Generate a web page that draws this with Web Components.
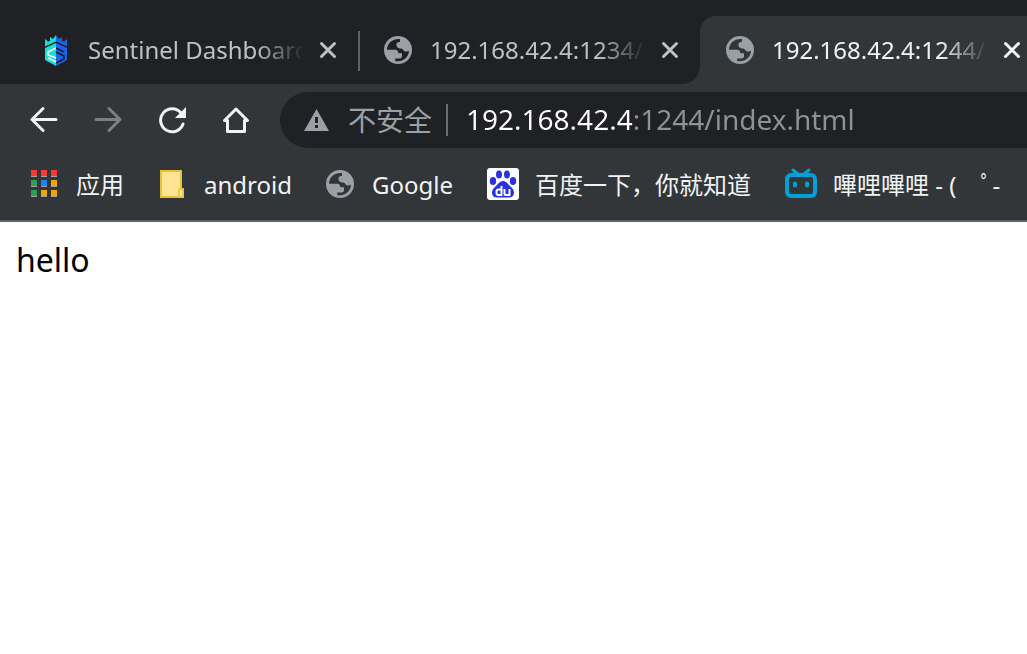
<!DOCTYPE html>
<html lang="zh">
<head>
<meta charset="utf-8">
<title>192.168.42.4:1244/index.html</title>
<style>
html, body { margin: 0; }
body { background: #fff; font-family: "Noto Sans", "Noto Sans CJK SC", sans-serif; overflow-x: hidden; }
</style>
</head>
<body>
<browser-window></browser-window>
<script>
const define = (name, html, setup) => {
  const template = document.createElement('template');
  template.innerHTML = html;
  customElements.define(name, class extends HTMLElement {
    constructor() {
      super();
      this.attachShadow({ mode: 'open' }).append(template.content.cloneNode(true));
    }
    connectedCallback() { if (setup) setup(this, this.shadowRoot); }
  });
};

const ICONS = {
  globe: ['0 0 28 28', '<path fill="#9aa0a6" fill-rule="evenodd" d="M14 0a14 14 0 1 0 0 28a14 14 0 1 0 0-28z M16 3.2c-7-.8-13 4-13 10.600h8.200c2.200.2 3 1.200 3.200 3.400h3.600v3.400c0 1-1 1.800-2.400 1.800h-4.400v2.600c7.400 1.400 13.400-3 13.800-10.200c-1.800 1-4.500 1.200-5.700-.8c-.8-1.200-1.900-1.600-3.600-1.600c-2-.2-3.100-1.500-3.300-3.400c-.1-1.600.8-2.500 2.200-3h1.400z"/>'],
  sentinel: ['0 0 24 32', '<path fill="#1be0cf" d="M1 5l3 2.500 2-.5V3l3 2 3-4v6.500L1 12.500zM1 14l11-5v23L1 26z"/><path fill="#1d63e8" d="M23 5l-3 2.500-2-.5V3l-3 2-3-4v6.500l11 5zM23 14L12 9v23l11-6z"/><path fill="none" stroke="#fff" stroke-width="1.500" d="M12 14l-8 4v3l8 3M4 24l8 4"/><path fill="none" stroke="#101d35" stroke-width="1.500" d="M12 14l8 4M12 18l8 4v3l-8 4"/>'],
  folder: ['0 0 28 28', '<path d="M3 1h20v18h2v8H3z" fill="#ffe591" stroke="#e8c13c" stroke-width="2"/><path d="M21 26v-7h4v8h-4z" fill="#ffe591" stroke="#e8c13c" stroke-width="1.500"/>'],
  apps: ['0 0 28 28', '<path fill="#fa3730" d="M1 0h6v6H1zm10 0h6v6h-6zm10 0h6v6h-6z"/><path fill="#2f9e55" d="M1 10h6v6H1zm0 10h6v6H1z"/><path fill="#1a86f5" d="M11 10h6v6h-6z"/><path fill="#f2a600" d="M21 10h6v6h-6zM11 20h6v6h-6zm10 0h6v6h-6z"/><path fill="#9b9d9e" d="M1 6h6v1H1zm10 0h6v1h-6zm10 0h6v1h-6zM1 16h6v1H1zm10 0h6v1h-6zm10 0h6v1h-6zM1 26h6v1H1zm10 0h6v1h-6zm10 0h6v1h-6z"/>'],
  baidu: ['0 0 32 32', '<rect width="32" height="32" rx="3" fill="#fff"/><g fill="#2932e1"><ellipse cx="6" cy="13" rx="3.200" ry="4"/><ellipse cx="12" cy="6.500" rx="3" ry="4"/><ellipse cx="20" cy="6.500" rx="3" ry="4"/><ellipse cx="26" cy="13" rx="3.200" ry="4"/><path d="M16 13c3 0 4.500 2.500 6.500 4.500c2.500 2.500 4.500 4 4.500 7c0 4-3 5.200-6 5H11c-3 .2-6-1-6-5c0-3 2-4.500 4.500-7c2-2 3.500-4.500 6.500-4.500z"/></g><path fill="none" stroke="#fff" stroke-width="2" d="M14.500 18v9h-3a2 2 0 0 1-2-2v-1.500a2 2 0 0 1 2-2h3M17.500 21v4.500a1.500 1.500 0 0 0 1.500 1.500h3.500v-6"/>'],
  bilibili: ['0 0 32 32', '<g fill="none" stroke="#00a1d6" stroke-linecap="round"><rect x="2" y="7" width="28" height="21" rx="4" stroke-width="4"/><path stroke-width="3" d="M8 2l5 4M24 2l-5 4"/><path stroke-width="4" d="M10 15.500v2M22 15.500v2"/></g>'],
  close: ['0 0 18 18', '<path fill="none" stroke="currentColor" stroke-width="3" stroke-linecap="round" d="M2.500 2.500l13 13m0-13l-13 13"/>'],
  back: ['0 0 28 28', '<path fill="none" stroke="currentColor" stroke-width="3" stroke-linecap="round" stroke-linejoin="round" d="M13 2.500L2 13.500l11 11M2 13.500h24"/>'],
  forward: ['0 0 28 28', '<path fill="none" stroke="currentColor" stroke-width="3" stroke-linecap="round" stroke-linejoin="round" d="M15 2.500l11 11-11 11M26 13.500H2"/>'],
  reload: ['0 0 28 28', '<path fill="none" stroke="currentColor" stroke-width="3" stroke-linecap="round" d="M23 7a11.500 11.500 0 1 0 2 11"/><path fill="currentColor" d="M28 1v11H17z"/>'],
  home: ['0 0 28 28', '<path fill="none" stroke="currentColor" stroke-width="3" stroke-linecap="round" stroke-linejoin="round" d="M2.500 14.500L14 3l11.500 11.500h-3V25.500h-17v-11z"/>'],
  warning: ['0 0 26 24', '<path fill="#9aa0a6" d="M12.500 1L25 23H0z"/><path fill="#202124" d="M11 9h3v6h-3zM11 17h3v3h-3z"/>']
};
define('ui-icon', `<style>
:host { display: block; flex: none; }
svg { display: block; width: 100%; height: 100%; }
</style>`, (host, root) => {
  const [box, art] = ICONS[host.getAttribute('name')];
  root.innerHTML += `<svg viewBox="${box}" aria-hidden="true">${art}</svg>`;
});

define('browser-tab', `<style>
:host { display: flex; align-items: center; flex: 0 0 342px; height: 68px; box-sizing: border-box; padding-left: 26px; color: #bdc1c6; position: relative; }
:host([separated])::after { content: ""; position: absolute; right: -2px; top: 15px; width: 2px; height: 40px; background: #5f6165; }
:host([active]) { background: #323639; color: #f1f3f4; border-radius: 16px 16px 0 0; }
:host([active])::before { content: ""; position: absolute; left: -16px; bottom: 0; width: 16px; height: 16px; background: radial-gradient(circle at 0 0, #202124 15px, #323639 16px); }
::slotted(ui-icon) { width: 28px; height: 32px; }
.title { width: 216px; margin-left: 18px; font-size: 24px; line-height: 32px; white-space: nowrap; overflow: hidden; mask-image: linear-gradient(90deg, #000 168px, transparent 216px); }
button { display: grid; place-items: center; width: 32px; height: 32px; margin: 0 0 0 8px; padding: 0; border: 0; background: none; color: inherit; }
button ui-icon { width: 18px; height: 18px; }
</style>
<slot name="icon"></slot><div class="title"><slot></slot></div>
<button aria-label="关闭"><ui-icon name="close"></ui-icon></button>`);

define('tool-button', `<style>
:host { display: block; flex: none; color: #f1f3f4; }
:host([dim]) { color: #7d8083; }
button { display: grid; place-items: center; width: 64px; height: 56px; margin: 0; padding: 0; border: 0; background: none; color: inherit; }
ui-icon { width: 28px; height: 28px; }
</style><button><ui-icon name="back"></ui-icon></button>`, (host, root) => {
  const button = root.querySelector('button');
  button.setAttribute('aria-label', host.getAttribute('label'));
  const icon = document.createElement('ui-icon');
  icon.setAttribute('name', host.getAttribute('icon'));
  button.replaceChildren(icon);
});

define('address-bar', `<style>
:host { display: flex; align-items: center; flex: 1; min-width: 0; height: 56px; margin-left: 12px; padding-left: 24px; border-radius: 28px 0 0 28px; background: #202124; box-sizing: border-box; font-size: 28px; line-height: 40px; }
ui-icon { width: 26px; height: 24px; }
label { margin-left: 18px; padding-right: 14px; border-right: 2px solid #6b6d70; color: #9aa0a6; line-height: 32px; white-space: nowrap; }
input { flex: 1; min-width: 0; margin: 0 0 0 18px; padding: 0 0 2px; border: 0; outline: 0; height: 40px; font: inherit; color: #fff; background: linear-gradient(90deg, #fff 167px, #8f9194 167px) text; -webkit-text-fill-color: transparent; }
</style>
<ui-icon name="warning"></ui-icon><label for="url">不安全</label>
<input id="url" type="text" value="192.168.42.4:1244/index.html" spellcheck="false">`);

define('bookmark-link', `<style>
:host { display: block; flex: none; }
a { display: flex; align-items: center; height: 32px; color: #f1f3f4; font-size: 24px; line-height: 32px; text-decoration: none; white-space: nowrap; }
span { padding-top: 2px; }
::slotted(ui-icon) { width: 28px; height: 28px; margin-right: 18px; }
::slotted(ui-icon.large) { width: 32px; height: 32px; margin-right: 16px; }
</style><a href="#"><slot name="icon"></slot><span><slot></slot></span></a>`);

define('browser-window', `<style>
:host { display: block; }
.tabs { display: flex; align-items: flex-end; height: 84px; padding-left: 16px; background: #202124; overflow: hidden; }
.tools { display: flex; align-items: center; padding: 8px 0 8px 12px; background: #323639; }
.marks { display: flex; gap: 34px; padding: 12px 0 20px 30px; background: #323639; border-bottom: 2px solid #5f6165; overflow: hidden; }
main { padding: 16px; font-size: 32px; line-height: 44px; color: #000; }
p { margin: 0; }
</style>
<nav class="tabs">
<browser-tab separated><ui-icon slot="icon" name="sentinel"></ui-icon>Sentinel Dashboard</browser-tab>
<browser-tab><ui-icon slot="icon" name="globe"></ui-icon>192.168.42.4:1234/</browser-tab>
<browser-tab active><ui-icon slot="icon" name="globe"></ui-icon>192.168.42.4:1244/</browser-tab>
</nav>
<div class="tools">
<tool-button icon="back" label="后退"></tool-button><tool-button icon="forward" label="前进" dim></tool-button><tool-button icon="reload" label="刷新"></tool-button><tool-button icon="home" label="主页"></tool-button>
<address-bar></address-bar>
</div>
<nav class="marks">
<bookmark-link><ui-icon slot="icon" name="apps"></ui-icon>应用</bookmark-link>
<bookmark-link><ui-icon slot="icon" name="folder"></ui-icon>android</bookmark-link>
<bookmark-link><ui-icon slot="icon" name="globe"></ui-icon>Google</bookmark-link>
<bookmark-link><ui-icon slot="icon" name="baidu" class="large"></ui-icon>百度一下，你就知道</bookmark-link>
<bookmark-link><ui-icon slot="icon" name="bilibili" class="large"></ui-icon>嗶哩嗶哩 - (&#x3000;&#xff9f;-</bookmark-link>
</nav>
<main><p>hello</p></main>`);
</script>
</body>
</html>
